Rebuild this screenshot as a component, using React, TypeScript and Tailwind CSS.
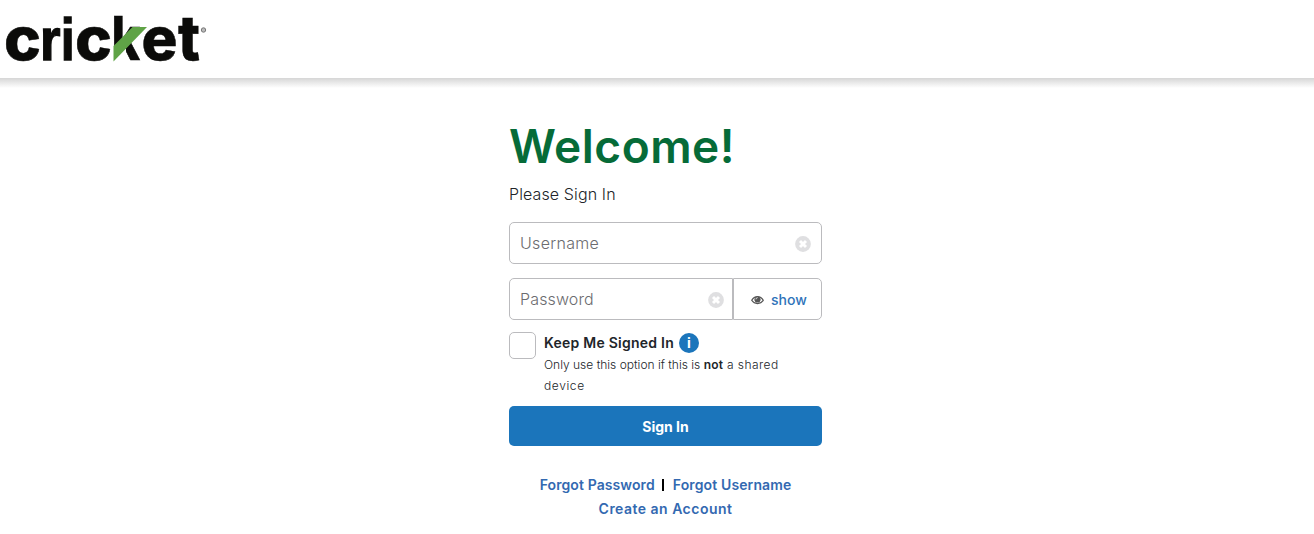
import React from "react";

const Logo = () => (
  <svg width="230" height="78" viewBox="0 0 230 78" role="img" aria-label="cricket" className="block">
    <g fill="#0b0b09" stroke="#0b0b09">
      <g fontFamily="Inter, sans-serif" fontWeight="800" fontSize="60" strokeWidth="0.500">
        <text x="4" y="60" textLength="37" lengthAdjust="spacingAndGlyphs">c</text>
        <text x="75" y="60" textLength="37" lengthAdjust="spacingAndGlyphs">c</text>
        <text transform="translate(111.500 60) scale(0.800 1)">k</text>
        <text x="141.500" y="60" textLength="36" lengthAdjust="spacingAndGlyphs">e</text>
        <text x="178" y="60" fontSize="61.500" textLength="22" lengthAdjust="spacingAndGlyphs">t</text>
      </g>
      <g fontFamily="Liberation Sans, sans-serif" fontWeight="700" fontSize="60" strokeWidth="1.400">
        <text x="40" y="59.500" textLength="20.500" lengthAdjust="spacingAndGlyphs">r</text>
        <text x="60.800" y="59.500" textLength="14" lengthAdjust="spacingAndGlyphs">i</text>
      </g>
    </g>
    {/* green slash, with the gap it leaves below */}
    <path d="M113 50V62H126V49Z" fill="#fff" />
    <path d="M113.500 46L132.500 27H147L113.500 61.500Z" fill="#5fa346" />
    <circle cx="203.500" cy="30" r="2.200" fill="#bbb" stroke="#777" strokeWidth="1" />
  </svg>
);

const ClearIcon = () => (
  <svg width="16" height="16" viewBox="0 0 16 16" className="mt-0.5 shrink-0">
    <circle cx="8" cy="8" r="7.900" fill="#dfdfe1" />
    <path d="M5 5L11 11M11 5L5 11" stroke="#fff" strokeWidth="2.900" />
  </svg>
);

const EyeIcon = () => (
  <svg width="13" height="10" viewBox="0 0 13 10" className="mt-0.5 shrink-0">
    <path d="M0.700 5.300C3.500 0.300 9.500 0.300 12.300 5.300C9.500 9.700 3.500 9.700 0.700 5.300Z" fill="#fff" stroke="#555" strokeWidth="1.200" />
    <circle cx="6.500" cy="4.500" r="3.100" fill="#555" />
    <path d="M5 4.300C5 3.300 5.600 2.700 6.600 2.700" fill="none" stroke="#fff" strokeWidth="0.900" />
  </svg>
);

const App = () => {
  return (
    <div className="h-[534px] overflow-hidden bg-white font-['Inter',sans-serif] text-[#212529]">
      <header className="h-[78px] bg-white">
        <Logo />
      </header>
      <div className="h-2.5 bg-linear-to-b from-[#d6d6d6] to-white"></div>

      <main className="ml-[509px] w-[313px] pt-[31px]">
        <h1 className="h-14 whitespace-nowrap text-[46px] font-semibold leading-[54px] tracking-[0.5px] text-[#066b38]">
          <span>Welcome!</span>
        </h1>
        <p className="mt-[7px] text-base font-light leading-6 tracking-[0.12px]">
          <span>Please Sign In</span>
        </p>

        <div className="mt-4 flex h-[42px] items-center justify-between rounded-[5px] border border-[#bbbbbe] pl-2.5 pr-2.5">
          <span className="text-base font-light tracking-[0.3px] text-[#6c6c70]">Username</span>
          <ClearIcon />
        </div>

        <div className="mt-3.5 flex h-[42px]">
          <div className="flex w-56 items-center justify-between rounded-l-[5px] border border-[#bbbbbe] pl-2.5 pr-2">
            <span className="text-base font-light tracking-[0.15px] text-[#6c6c70]">Password</span>
            <ClearIcon />
          </div>
          <button className="flex w-[89px] items-center rounded-r-[5px] border border-[#bbbbbe] pl-[17px]">
            <EyeIcon />
            <span className="ml-[7px] mt-0.5 text-sm font-medium text-[#2f73b9]">show</span>
          </button>
        </div>

        <div className="mt-3 flex h-[74px]">
          <div className="h-[27px] w-[27px] shrink-0 rounded-[5px] border border-[#bbbbbe]"></div>
          <div className="ml-2">
            <div className="flex h-[22px] items-center">
              <span className="text-sm font-semibold tracking-[0.24px]">Keep Me Signed In</span>
              <span className="ml-[5px] flex h-5 w-5 items-center justify-center rounded-full bg-[#1b75bb] text-sm font-bold text-white">
                i
              </span>
            </div>
            <p className="whitespace-nowrap text-xs font-light leading-[21px]">
              <span>Only use this option if this is </span>
              <b className="font-semibold tracking-[0.2px]">not</b>
              <span className="tracking-[0.45px]"> a shared</span>
              <br />
              <span className="tracking-[0.6px]">device</span>
            </p>
          </div>
        </div>

        <button className="h-10 w-full rounded-[5px] bg-[#1b75bb] pt-0.5 text-sm font-bold text-white">
          Sign In
        </button>

        <div className="mt-[27px] flex flex-col items-center text-sm font-semibold leading-6 text-[#3369b1]">
          <div className="flex items-center">
            <a className="tracking-[0.1px]">Forgot Password</a>
            <span className="ml-[7px] mr-[9px] h-3 w-0.5 bg-black"></span>
            <a className="tracking-[0.12px]">Forgot Username</a>
          </div>
          <a className="tracking-[0.48px]">Create an Account</a>
        </div>
      </main>
    </div>
  );
};

export default App;
